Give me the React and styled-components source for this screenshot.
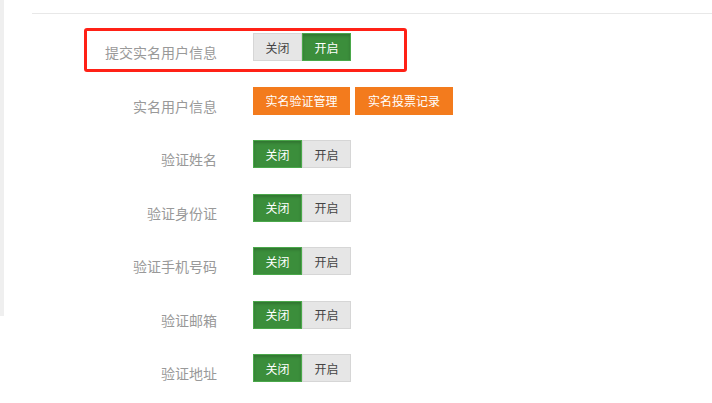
import React, { useState } from "react";
import styled, { createGlobalStyle } from "styled-components";

const GlobalStyle = createGlobalStyle`
  body {
    margin: 0;
    background: #fff;
    font-family: "Noto Sans CJK SC", "Noto Sans", sans-serif;
  }
`;

const Page = styled.div`
  display: flex;
  align-items: flex-start;
  width: 712px;
  height: 403px;
  overflow: hidden;
`;

const SideStrip = styled.div`
  width: 4px;
  height: 316px;
  background: #efefef;
  flex-shrink: 0;
`;

const Main = styled.div`
  flex: 1;
  margin-left: 28px;
  padding-top: 13px;
`;

const Divider = styled.div`
  border-top: 1px solid #e8e8e8;
`;

const Form = styled.div`
  display: flex;
  flex-direction: column;
  gap: 25.5px;
  padding-top: 19px;
`;

const Row = styled.div`
  position: relative;
  display: flex;
  align-items: flex-start;
  gap: 36px;
  height: 28px;
`;

const Highlight = styled.div`
  position: absolute;
  left: 52px;
  top: -5px;
  width: 317px;
  height: 38px;
  border: 3px solid #ff2116;
  border-radius: 3px;
  pointer-events: none;
`;

const Label = styled.div`
  width: 185px;
  padding-top: 11px;
  text-align: right;
  font-size: 14px;
  line-height: 16px;
  color: #999;
`;

const SwitchGroup = styled.div`
  display: flex;
`;

const SwitchBtn = styled.button`
  box-sizing: border-box;
  width: 49px;
  height: 28px;
  margin: 0;
  padding: 0;
  font-family: inherit;
  font-size: 12px;
  cursor: pointer;
  border: 1px solid ${(p) => (p.$active ? "#4aa84a" : "#d6d6d6")};
  background: ${(p) => (p.$active ? "#3b8e3b" : "#e6e6e6")};
  color: ${(p) => (p.$active ? "#fff" : "#444")};
  box-shadow: ${(p) =>
    p.$active ? "inset 0 2px 3px rgba(0, 0, 0, 0.18)" : "none"};
`;

const Actions = styled.div`
  display: flex;
  gap: 5px;
`;

const OrangeBtn = styled.button`
  box-sizing: border-box;
  width: ${(p) => p.$w}px;
  height: 28px;
  margin: 0;
  padding: 0;
  border: none;
  background: #f37b1d;
  color: #fff;
  font-family: inherit;
  font-size: 12px;
  cursor: pointer;
`;

const Switch = ({ initial }) => {
  const [on, setOn] = useState(initial);
  return (
    <SwitchGroup>
      <SwitchBtn $active={!on} onClick={() => setOn(false)}>
        关闭
      </SwitchBtn>
      <SwitchBtn $active={on} onClick={() => setOn(true)}>
        开启
      </SwitchBtn>
    </SwitchGroup>
  );
};

const fields = ["验证姓名", "验证身份证", "验证手机号码", "验证邮箱", "验证地址"];

export default function App() {
  return (
    <>
      <GlobalStyle />
      <Page>
        <SideStrip />
        <Main>
          <Divider />
          <Form>
            <Row>
              <Highlight />
              <Label>提交实名用户信息</Label>
              <Switch initial={true} />
            </Row>
            <Row>
              <Label>实名用户信息</Label>
              <Actions>
                <OrangeBtn $w={97}>实名验证管理</OrangeBtn>
                <OrangeBtn $w={98}>实名投票记录</OrangeBtn>
              </Actions>
            </Row>
            {fields.map((f) => (
              <Row key={f}>
                <Label>{f}</Label>
                <Switch initial={false} />
              </Row>
            ))}
          </Form>
        </Main>
      </Page>
    </>
  );
}
